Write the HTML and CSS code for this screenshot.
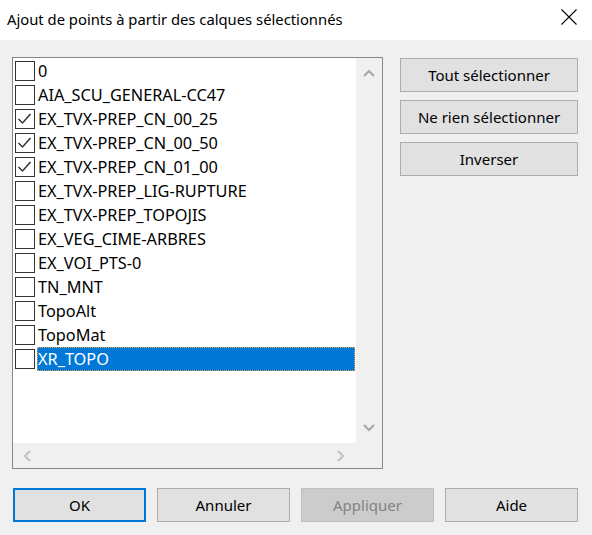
FILE: index.html
```html
<!DOCTYPE html>
<html>
<head>
<meta charset="utf-8">
<link rel="stylesheet" href="styles.css">
</head>
<body>
<div class="dialog">
  <div class="titlebar">
    <span class="title">Ajout de points à partir des calques sélectionnés</span>
    <svg class="close" width="16" height="16" viewBox="0 0 16 16"><path d="M0.5 0.5 L15.5 15.5 M15.5 0.5 L0.5 15.5" stroke="#000" stroke-width="1.1" fill="none"/></svg>
  </div>
  <div class="content">
    <div class="top">
      <div class="listbox">
        <div class="listmain">
          <div class="items">
            <div class="row"><span class="cb"></span><span class="lbl">0</span></div>
            <div class="row"><span class="cb"></span><span class="lbl">AIA_SCU_GENERAL-CC47</span></div>
            <div class="row"><span class="cb"><svg width="20" height="20" viewBox="0 0 20 20"><path d="M3.5 10 L7.5 14 L15.5 5" stroke="#333" stroke-width="1.5" fill="none"/></svg></span><span class="lbl">EX_TVX-PREP_CN_00_25</span></div>
            <div class="row"><span class="cb"><svg width="20" height="20" viewBox="0 0 20 20"><path d="M3.5 10 L7.5 14 L15.5 5" stroke="#333" stroke-width="1.5" fill="none"/></svg></span><span class="lbl">EX_TVX-PREP_CN_00_50</span></div>
            <div class="row"><span class="cb"><svg width="20" height="20" viewBox="0 0 20 20"><path d="M3.5 10 L7.5 14 L15.5 5" stroke="#333" stroke-width="1.5" fill="none"/></svg></span><span class="lbl">EX_TVX-PREP_CN_01_00</span></div>
            <div class="row"><span class="cb"></span><span class="lbl">EX_TVX-PREP_LIG-RUPTURE</span></div>
            <div class="row"><span class="cb"></span><span class="lbl">EX_TVX-PREP_TOPOJIS</span></div>
            <div class="row"><span class="cb"></span><span class="lbl">EX_VEG_CIME-ARBRES</span></div>
            <div class="row"><span class="cb"></span><span class="lbl">EX_VOI_PTS-0</span></div>
            <div class="row"><span class="cb"></span><span class="lbl">TN_MNT</span></div>
            <div class="row"><span class="cb"></span><span class="lbl">TopoAlt</span></div>
            <div class="row"><span class="cb"></span><span class="lbl">TopoMat</span></div>
            <div class="row selected"><span class="cb"></span><span class="lbl">XR_TOPO</span></div>
          </div>
          <div class="vscroll">
            <svg width="12" height="8" viewBox="0 0 12 8"><path d="M1 7 L6 2 L11 7" stroke="#a8a8a8" stroke-width="2.2" fill="none"/></svg>
            <svg width="12" height="8" viewBox="0 0 12 8"><path d="M1 1 L6 6 L11 1" stroke="#a8a8a8" stroke-width="2.2" fill="none"/></svg>
          </div>
        </div>
        <div class="hscroll">
          <svg width="8" height="12" viewBox="0 0 8 12"><path d="M7 1 L2 6 L7 11" stroke="#c4c4c4" stroke-width="2.2" fill="none"/></svg>
          <svg width="8" height="12" viewBox="0 0 8 12"><path d="M1 1 L6 6 L1 11" stroke="#c4c4c4" stroke-width="2.2" fill="none"/></svg>
        </div>
      </div>
      <div class="side">
        <div class="btn">Tout sélectionner</div>
        <div class="btn">Ne rien sélectionner</div>
        <div class="btn">Inverser</div>
      </div>
    </div>
    <div class="bottom">
      <div class="btn default">OK</div>
      <div class="btn">Annuler</div>
      <div class="btn disabled">Appliquer</div>
      <div class="btn">Aide</div>
    </div>
  </div>
</div>
</body>
</html>
```
FILE: styles.css
```css
html, body {
  margin: 0;
  padding: 0;
}
body {
  width: 592px;
  height: 535px;
  overflow: hidden;
  font-family: "Noto Sans", "Open Sans", sans-serif;
  font-size: 15px;
  color: #000;
}
.dialog {
  width: 592px;
  height: 535px;
  background: #f0f0f0;
  display: flex;
  flex-direction: column;
}
.titlebar {
  height: 40px;
  background: #fff;
  display: flex;
  align-items: center;
  justify-content: space-between;
  padding: 0 15px 0 7px;
  box-sizing: border-box;
}
.title {
  font-size: 14.8px;
  margin-top: -3px;
}
.close {
  display: block;
  margin-top: -6px;
}
.content {
  padding: 17px 14px 0 12px;
}
.top {
  display: flex;
}
.listbox {
  width: 371px;
  height: 412px;
  border: 1px solid #828790;
  box-sizing: border-box;
  background: #fff;
  display: flex;
  flex-direction: column;
}
.listmain {
  display: flex;
  height: 385px;
}
.items {
  flex: 1;
  padding-top: 1px;
}
.row {
  height: 24px;
  display: flex;
  align-items: center;
}
.cb {
  width: 20px;
  height: 20px;
  box-sizing: border-box;
  border: 1px solid #333;
  margin-left: 2px;
  background: #fff;
  position: relative;
}
.cb svg {
  position: absolute;
  left: -1px;
  top: -1px;
}
.lbl {
  margin-left: 2px;
  margin-right: 1px;
  flex: 1;
  height: 24px;
  line-height: 22px;
  box-sizing: border-box;
  border: 1px solid transparent;
  padding-left: 0;
  white-space: nowrap;
  font-size: 16.3px;
}
.selected .lbl {
  background: #0078d7;
  color: #fff;
  border: 1px dotted #f0a040;
}
.vscroll {
  width: 26px;
  background: #f0f0f0;
  display: flex;
  flex-direction: column;
  justify-content: space-between;
  align-items: center;
  padding: 11px 0 11px 0;
  box-sizing: border-box;
}
.vscroll svg, .hscroll svg {
  display: block;
}
.hscroll {
  height: 25px;
  background: #f0f0f0;
  display: flex;
  align-items: center;
  justify-content: space-between;
  padding: 0 37px 0 10px;
}
.side {
  margin-left: 17px;
  margin-top: 1px;
  width: 178px;
  display: flex;
  flex-direction: column;
  gap: 8px;
}
.btn {
  height: 34px;
  box-sizing: border-box;
  background: #e1e1e1;
  border: 1px solid #adadad;
  display: flex;
  align-items: center;
  justify-content: center;
  font-size: 15px;
  white-space: nowrap;
}
.bottom {
  margin-top: 19px;
  margin-left: 1px;
  display: flex;
  gap: 11px;
}
.bottom .btn {
  width: 133px;
}
.btn.default {
  border: 2px solid #0078d7;
}
.btn.disabled {
  background: #cccccc;
  border-color: #bfbfbf;
  color: #838383;
}
```
